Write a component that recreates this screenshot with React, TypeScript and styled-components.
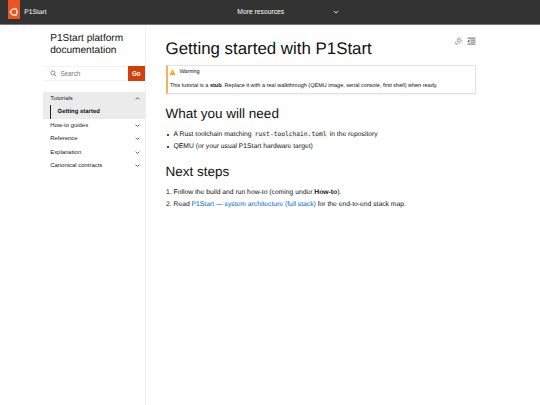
import React, { useState } from 'react';
import styled, { createGlobalStyle, css } from 'styled-components';

//styles
const GlobalStyle = createGlobalStyle`
  * {
    box-sizing: border-box;
  }
  body {
    margin: 0;
    background: #fff;
    color: #111;
    font-family: 'Liberation Sans', Arial, sans-serif;
    font-size: 6.75px;
    text-rendering: geometricPrecision;
    overflow: hidden;
  }
  button,
  input {
    font-family: inherit;
    border: none;
    border-radius: 0;
    padding: 0;
    margin: 0;
  }
`;

const Page = styled.div`
  display: flex;
  flex-direction: column;
  height: 100vh;
`;

const Header = styled.header`
  display: flex;
  flex: none;
  height: 25.4px;
  padding-left: 8px;
  background: #333;
  border-bottom: 1px solid #777;
  color: #fff;
  line-height: 26px;
`;

const LogoTag = styled.div`
  display: flex;
  width: 12px;
  height: 18.5px;
  padding: 7px 0 0 1px;
  background: #e95420;
`;

const Brand = styled.span`
  width: 217.3px;
  padding-left: 4.2px;
  font-size: 6.75px;
`;

const HeaderMenu = styled.button`
  display: flex;
  align-items: center;
  justify-content: space-between;
  width: 101.4px;
  height: 23.6px;
  background: transparent;
  color: #fff;
  font-size: 6.75px;
`;

const Body = styled.div`
  display: flex;
  flex: 1;
  padding-left: 43.4px;
`;

const Sidebar = styled.aside`
  width: 102.2px;
  border-right: 1px solid #f1f1f1;
`;

const SidebarTitle = styled.a`
  display: block;
  padding: 7.3px 0 0 6.8px;
  font-size: 10.1px;
  line-height: 12.1px;
  color: #111;
`;

const SearchForm = styled.form`
  display: flex;
  align-items: center;
  height: 15.8px;
  margin-top: 8.7px;
  padding-left: 7px;
  border-top: 1px solid #f3f3f3;
  border-bottom: 1px solid #f3f3f3;
`;

const SearchInput = styled.input`
  flex: 1;
  min-width: 0;
  margin-left: 3px;
  background: transparent;
  font-size: 6.3px;
  outline: none;
  &::placeholder {
    color: #777;
    opacity: 1;
  }
`;

const GoButton = styled.button`
  width: 17px;
  height: 15.8px;
  margin-right: -0.2px;
  background: #d13f0c;
  color: #fff;
  font-size: 6.3px;
  font-weight: bold;
`;

const Nav = styled.nav`
  margin-top: 10.2px;
`;

const NavButton = styled.button<{ $open: boolean }>`
  display: flex;
  align-items: center;
  justify-content: space-between;
  width: 100%;
  height: 13.5px;
  padding: 0 4.2px 0 6.8px;
  background: ${(props) => (props.$open ? '#ebebeb' : 'transparent')};
  color: #222;
  font-size: 5.95px;
  line-height: 7px;
`;

const NavLink = styled.a`
  display: block;
  height: 13.5px;
  padding-left: 6.6px;
  background: #ebebeb;
  font-size: 5.95px;
  font-weight: bold;
  line-height: 14.2px;
  span {
    display: block;
    height: 13.5px;
    padding-left: 6.6px;
    border-left: 1px solid #222;
  }
`;

const Content = styled.main`
  width: 330.5px;
  padding: 11.4px 0 0 20px;
`;

const TitleRow = styled.div`
  display: flex;
  justify-content: space-between;
`;

const Title = styled.h1`
  margin: 0;
  font-size: 16.88px;
  font-weight: 400;
  line-height: 23px;
`;

const Tools = styled.div`
  display: flex;
  gap: 4px;
  height: 9px;
`;

const Heading = styled.h2<{ $top: number }>`
  margin: ${(props) => props.$top}px 0 0;
  font-size: 13.5px;
  font-weight: 400;
  line-height: 17px;
`;

const Admonition = styled.div`
  height: 28.5px;
  margin-top: 5.4px;
  border: 1px solid #e2e2e2;
  border-left: 2px solid #edb562;
  box-shadow: 0 1px 2px rgba(0, 0, 0, 0.06);
  font-size: 5.5px;
`;

const AdmonitionTitle = styled.div`
  display: flex;
  align-items: center;
  gap: 3px;
  height: 12px;
  padding-left: 1.8px;
`;

const AdmonitionText = styled.p`
  margin: 0;
  padding: 4.2px 0 0 2.3px;
  line-height: 9px;
  white-space: nowrap;
`;

const listStyle = css`
  margin: 6.7px 0 0;
  padding-left: 8px;
  line-height: 12px;
`;

const BulletList = styled.ul`
  ${listStyle}
  list-style: none;
  li {
    display: flex;
    align-items: center;
    height: 12px;
    white-space: pre;
  }
  li::before {
    content: '';
    width: 2px;
    height: 2px;
    margin: 0 4.6px 0 -6.6px;
    border-radius: 50%;
    background: #111;
  }
`;

const StepList = styled.ol`
  ${listStyle}
`;

const Code = styled.code`
  padding: 0 1.3px;
  background: #f8f8f8;
  color: #222;
  font-family: 'DejaVu Sans Mono', monospace;
  font-size: 6.28px;
  line-height: 9px;
`;

const Link = styled.a`
  color: #0066cc;
`;

function UbuntuMark() {
  return (
    <svg width="10" height="10" viewBox="0 0 10 10" fill="none">
      <circle cx="5" cy="5" r="3.1" stroke="#fff" strokeWidth="1.3" />
      <g fill="#fff" stroke="#e95420" strokeWidth="0.4">
        <circle cx="1.5" cy="5" r="1.2" />
        <circle cx="6.9" cy="1.9" r="1.2" />
        <circle cx="6.9" cy="8.1" r="1.2" />
      </g>
    </svg>
  );
}

function Chevron({ up = false, size = 5 }: { up?: boolean; size?: number }) {
  return (
    <svg width={size} height={size} viewBox="0 0 5 5" fill="none">
      <path
        d={up ? 'M.6 3.4 2.5 1.7 4.4 3.4' : 'M.6 1.7 2.5 3.4 4.4 1.7'}
        stroke="currentColor"
        strokeWidth="0.7"
      />
    </svg>
  );
}

function SearchIcon() {
  return (
    <svg width="7" height="7" viewBox="0 0 7 7" fill="none" stroke="#666">
      <circle cx="2.9" cy="2.9" r="2" strokeWidth="0.7" />
      <path d="M4.4 4.4 6.2 6.2" strokeWidth="0.8" />
    </svg>
  );
}

function WarningIcon() {
  return (
    <svg width="7" height="7" viewBox="0 0 7 7">
      <path d="M3.5.7 6.2 5.8H.8z" fill="#f99b11" stroke="#f99b11" strokeWidth=".4" />
      <path d="M3.5 2.4v1.8M3.5 4.8v.6" stroke="#fff" strokeWidth=".4" />
    </svg>
  );
}

function ThemeIcon() {
  return (
    <svg width="9" height="9" viewBox="0 0 9 9" fill="none" stroke="#888">
      <circle cx="5" cy="3.4" r="1.6" strokeWidth="0.8" />
      <path
        d="M5 .1v1M5 5.8v1M7.2 3.4h1.2M6.7 1.7l.8-.8M6.7 5.1l.7.8M3.3 1.7l-.6-.7"
        strokeWidth="0.7"
      />
      <path d="M2 4.7a1.4 1.4 0 1 0 1.8 2.1 1.5 1.5 0 0 1-1.8-2.1z" strokeWidth="0.6" />
    </svg>
  );
}

function TocIcon() {
  return (
    <svg width="9" height="9" viewBox="0 0 9 9" stroke="#444">
      <path d="M.5 1.1h8M3.5 3.1h5M3.5 5.1h5M.5 7.1h8" strokeWidth="0.8" />
      <path d="M2.4 2.6v3.1L.6 4.15z" fill="#444" stroke="none" />
    </svg>
  );
}

const sections = [
  { title: 'Tutorials', pages: ['Getting started'] },
  { title: 'How-to guides', pages: [] },
  { title: 'Reference', pages: [] },
  { title: 'Explanation', pages: [] },
  { title: 'Canonical contracts', pages: [] },
];

function App() {
  const [opened, setOpened] = useState('Tutorials');

  return (
    <Page>
      <GlobalStyle />
      <Header>
        <LogoTag>
          <UbuntuMark />
        </LogoTag>
        <Brand>P1Start</Brand>
        <HeaderMenu>
          <span>More resources</span>
          <Chevron size={6} />
        </HeaderMenu>
      </Header>
      <Body>
        <Sidebar>
          <SidebarTitle>
            P1Start platform
            <br />
            documentation
          </SidebarTitle>
          <SearchForm onSubmit={(e) => e.preventDefault()}>
            <SearchIcon />
            <SearchInput placeholder="Search" />
            <GoButton type="submit">Go</GoButton>
          </SearchForm>
          <Nav>
            {sections.map(({ title, pages }) => (
              <React.Fragment key={title}>
                <NavButton
                  $open={opened === title}
                  onClick={() => setOpened(opened === title ? '' : title)}
                >
                  <span>{title}</span>
                  <Chevron up={opened === title} />
                </NavButton>
                {opened === title &&
                  pages.map((page) => (
                    <NavLink key={page}>
                      <span>{page}</span>
                    </NavLink>
                  ))}
              </React.Fragment>
            ))}
          </Nav>
        </Sidebar>
        <Content>
          <TitleRow>
            <Title>Getting started with P1Start</Title>
            <Tools>
              <ThemeIcon />
              <TocIcon />
            </Tools>
          </TitleRow>
          <Admonition>
            <AdmonitionTitle>
              <WarningIcon />
              <span>Warning</span>
            </AdmonitionTitle>
            <AdmonitionText>
              This tutorial is a <b>stub</b>. Replace it with a real walkthrough
              (QEMU image, serial console, first shell) when ready.
            </AdmonitionText>
          </Admonition>
          <Heading $top={11.5}>What you will need</Heading>
          <BulletList>
            <li>
              A Rust toolchain matching <Code>rust-toolchain.toml</Code> in the
              {' repository'}
            </li>
            <li>QEMU (or your usual P1Start hardware target)</li>
          </BulletList>
          <Heading $top={10.2}>Next steps</Heading>
          <StepList>
            <li>
              Follow the build and run how-to (coming under <b>How-to</b>).
            </li>
            <li>
              Read <Link>P1Start — system architecture (full stack)</Link> for
              the end-to-end stack map.
            </li>
          </StepList>
        </Content>
      </Body>
    </Page>
  );
}

export default App;
